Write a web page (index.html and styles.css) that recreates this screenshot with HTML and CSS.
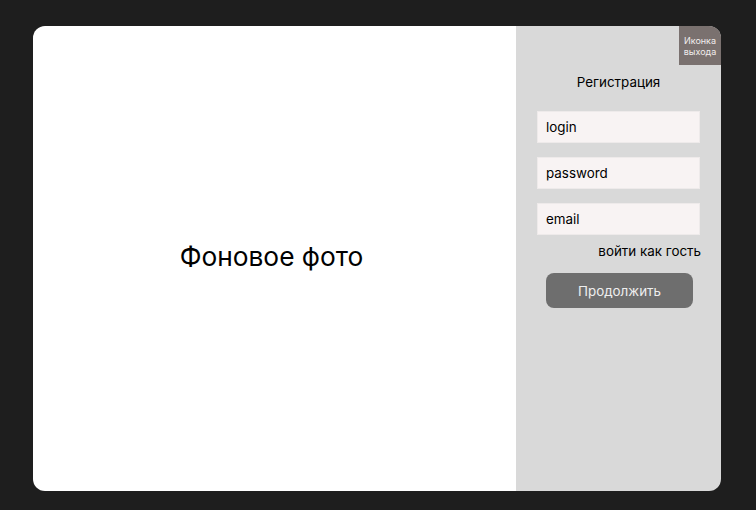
FILE: index.html
```html
<!DOCTYPE html>
<html lang="ru">
<head>
<meta charset="utf-8">
<link rel="stylesheet" href="styles.css">
</head>
<body>
<div class="frame">
  <div class="photo">Фоновое фото</div>
  <div class="panel">
    <div class="exit">Иконка<br>выхода</div>
    <div class="title">Регистрация</div>
    <div class="field">login</div>
    <div class="field">password</div>
    <div class="field field-last">email</div>
    <div class="guest">войти как гость</div>
    <div class="btn">Продолжить</div>
  </div>
</div>
</body>
</html>
```
FILE: styles.css
```css
html, body { margin: 0; padding: 0; }
body {
  background: #1e1e1e;
  font-family: Inter, "Noto Sans", sans-serif;
  width: 756px;
  height: 510px;
  padding: 26px 0 0 33px;
  box-sizing: border-box;
}
.frame {
  width: 688px;
  height: 465px;
  border-radius: 12px;
  overflow: hidden;
  display: flex;
}
.photo {
  width: 483px;
  background: #ffffff;
  display: flex;
  align-items: center;
  justify-content: center;
  font-size: 26.3px;
  color: #000;
  padding-right: 6px;
  padding-bottom: 5px;
  box-sizing: border-box;
}
.panel {
  flex: 1;
  background: #d9d9d9;
  position: relative;
  display: flex;
  flex-direction: column;
  align-items: center;
  padding-top: 48px;
}
.exit {
  position: absolute;
  top: 0;
  right: 0;
  width: 42px;
  height: 39px;
  background: #7a716f;
  color: #f1eded;
  font-size: 9px;
  line-height: 11px;
  display: flex;
  align-items: center;
  justify-content: center;
  text-align: center;
}
.title {
  font-size: 13.4px;
  line-height: 16px;
  color: #000;
  margin-bottom: 21px;
}
.field {
  width: 163px;
  height: 32px;
  box-sizing: border-box;
  background: #f8f3f3;
  border: 1px solid #eeeaea;
  margin-bottom: 14px;
  font-size: 13.4px;
  line-height: 30px;
  padding-left: 8px;
  color: #000;
}
.field.field-last { margin-bottom: 8px; }
.guest {
  align-self: flex-end;
  margin-right: 20px;
  font-size: 13.4px;
  line-height: 16px;
  color: #000;
}
.btn {
  margin-top: 14px;
  margin-left: 2px;
  width: 147px;
  height: 35px;
  border-radius: 8px;
  background: #6e6e6e;
  color: #eeeeee;
  font-size: 13.4px;
  display: flex;
  align-items: center;
  justify-content: center;
}
```
